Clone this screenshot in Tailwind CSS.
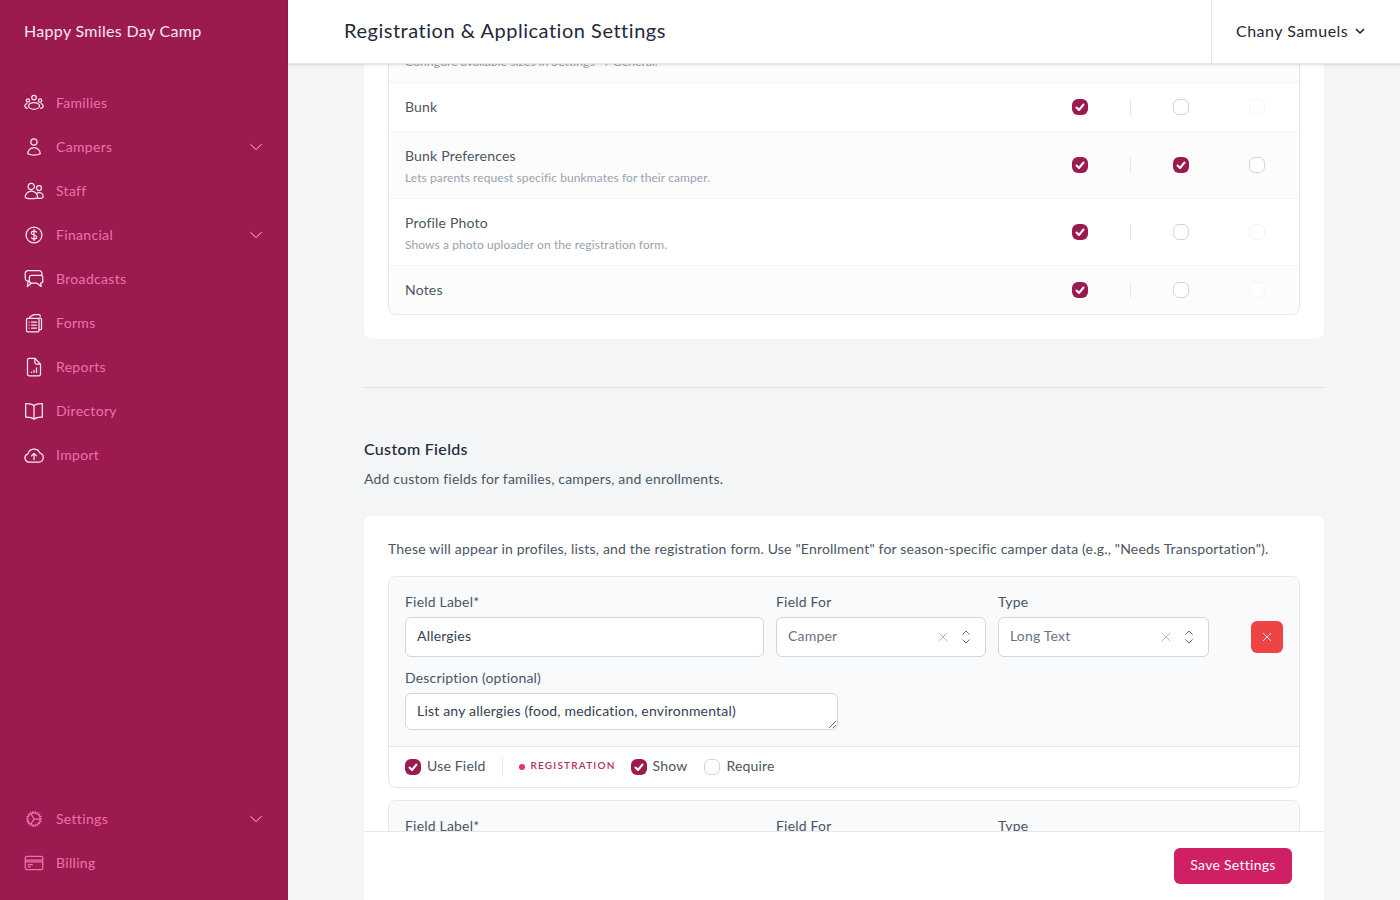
<!DOCTYPE html>
<html lang="en">

<head>
    <meta charset="UTF-8">
    <meta name="viewport" content="width=device-width, initial-scale=1.0">
    <title>Registration & Application Settings</title>
    <script src="https://cdn.jsdelivr.net/npm/@tailwindcss/browser@4"></script>
</head>

<body class="bg-[#f3f5f7] font-['Lato',sans-serif] tracking-[0.012em]">
    <div class="flex w-full h-screen overflow-hidden">
        <!-- Sidebar -->
        <div class="w-[288px] shrink-0 bg-[#9b1a4f] flex flex-col pb-[15px] tracking-[0.02em]">
            <div class="h-16 flex items-center pl-6 pb-[2px] text-base text-[#fce7f3]">Happy Smiles Day Camp</div>
            <div class="mt-[17px] flex flex-col flex-1 text-sm text-[#f070ad]">
                <a class="h-11 flex items-center pl-6 pr-[24px]">
                    <svg class="w-5 h-5 text-[#fce7f3]" fill="none" viewBox="0 0 24 24" stroke="currentColor" stroke-width="1.5"><circle cx="12" cy="5.5" r="2.7"/><circle cx="4.7" cy="9" r="2"/><circle cx="19.3" cy="9" r="2"/><ellipse cx="12" cy="15.5" rx="6.5" ry="4"/><path d="M4 12.5c-1.800.5-3 1.500-3 3s1.300 2.500 3.500 3M20 12.500c1.800.5 3 1.500 3 3s-1.300 2.500-3.500 3"/></svg>
                    <span class="ml-3">Families</span>
                </a>
                <a class="h-11 flex items-center pl-6 pr-[24px]">
                    <svg class="w-5 h-5 text-[#fce7f3]" fill="none" viewBox="0 0 24 24" stroke="currentColor" stroke-width="1.5"><path stroke-linecap="round" stroke-linejoin="round" d="M15.750 6a3.750 3.750 0 11-7.500 0 3.750 3.750 0 017.500 0zM4.500 20.120a7.500 7.500 0 0115 0A17.900 17.900 0 0112 21.750c-2.680 0-5.220-.58-7.500-1.630z"/></svg>
                    <span class="ml-3">Campers</span>
                    <svg class="w-4 h-4 ml-auto text-[#f9c6dc]" fill="none" viewBox="0 0 24 24" stroke="currentColor" stroke-width="1.500"><path stroke-linecap="round" stroke-linejoin="round" d="M4 8l8 8 8-8"/></svg>
                </a>
                <a class="h-11 flex items-center pl-6 pr-[24px]">
                    <svg class="w-5 h-5 text-[#fce7f3]" fill="none" viewBox="0 0 24 24" stroke="currentColor" stroke-width="1.5"><path stroke-linecap="round" stroke-linejoin="round" d="M12.500 6.500a3.750 3.750 0 11-7.500 0 3.750 3.750 0 017.500 0zM21 8.500a3 3 0 11-6 0 3 3 0 016 0zM1.500 19.500a7.400 7.400 0 0114.800 0c0 1-3 1.700-7.400 1.700s-7.400-.7-7.400-1.700zM16.500 20.800c3.500 0 6.500-.7 6.500-2 0-2.800-2.300-4.800-5-4.800-1 0-2 .3-2.800.8"/></svg>
                    <span class="ml-3">Staff</span>
                </a>
                <a class="h-11 flex items-center pl-6 pr-[24px]">
                    <svg class="w-5 h-5 text-[#fce7f3]" fill="none" viewBox="0 0 24 24" stroke="currentColor" stroke-width="1.5"><circle cx="12" cy="12" r="9.500"/><path stroke-linecap="round" stroke-linejoin="round" d="M12 5.500v13M15 8.500c-.7-.9-1.800-1.300-3-1.300-1.800 0-3.200 1-3.200 2.400 0 3.300 6.400 1.500 6.400 4.800 0 1.400-1.400 2.400-3.200 2.400-1.200 0-2.300-.4-3-1.300"/></svg>
                    <span class="ml-3">Financial</span>
                    <svg class="w-4 h-4 ml-auto text-[#f9c6dc]" fill="none" viewBox="0 0 24 24" stroke="currentColor" stroke-width="1.500"><path stroke-linecap="round" stroke-linejoin="round" d="M4 8l8 8 8-8"/></svg>
                </a>
                <a class="h-11 flex items-center pl-6 pr-[24px]">
                    <svg class="w-5 h-5 text-[#fce7f3]" fill="none" viewBox="0 0 24 24" stroke="currentColor" stroke-width="1.5"><path stroke-linecap="round" stroke-linejoin="round" d="M5.500 14.500H5A3.500 3.500 0 011.500 11V5.500A3.500 3.500 0 015 2h13a3.500 3.500 0 013.500 3.500V7.500M5 14.500L4 21l5-4M9 7.500h11a2.500 2.500 0 012.500 2.500v4.500A2.500 2.500 0 0120 17l.5 4-5-4H9a2.500 2.500 0 01-2.500-2.500V10A2.500 2.500 0 019 7.500z"/></svg>
                    <span class="ml-3">Broadcasts</span>
                </a>
                <a class="h-11 flex items-center pl-6 pr-[24px]">
                    <svg class="w-5 h-5 text-[#fce7f3]" fill="none" viewBox="0 0 24 24" stroke="currentColor" stroke-width="1.5"><path stroke-linecap="round" stroke-linejoin="round" d="M7 6.500V4.500L12 2h6a1.500 1.500 0 011.500 1.500V4M18 6h1.500a1.500 1.500 0 011.500 1.500v11a1.500 1.500 0 01-1.500 1.500H18M4.500 6.500h12A1.500 1.500 0 0118 8v13a1.500 1.500 0 01-1.500 1.500h-12A1.500 1.500 0 013 21V8a1.500 1.500 0 011.500-1.500zM9 11h6M9 14.500h6M9 18h6M6 11h.1M6 14.500h.1M6 18h.1"/></svg>
                    <span class="ml-3">Forms</span>
                </a>
                <a class="h-11 flex items-center pl-6 pr-[24px]">
                    <svg class="w-5 h-5 text-[#fce7f3]" fill="none" viewBox="0 0 24 24" stroke="currentColor" stroke-width="1.5"><path stroke-linecap="round" stroke-linejoin="round" d="M13 1.500H6A1.800 1.800 0 004.200 3.300v17.400A1.800 1.800 0 006 22.500h12a1.800 1.800 0 001.800-1.800V8.500zM13 1.500v5.200a1.800 1.800 0 001.800 1.800h5M9 18.500v-.5M12 18.500v-2.500M15 18.500V13"/></svg>
                    <span class="ml-3">Reports</span>
                </a>
                <a class="h-11 flex items-center pl-6 pr-[24px]">
                    <svg class="w-5 h-5 text-[#fce7f3]" fill="none" viewBox="0 0 24 24" stroke="currentColor" stroke-width="1.5"><path stroke-linecap="round" stroke-linejoin="round" d="M12 5.500C10 3.800 7 3 2 3.200v16.300c5-.2 8 .6 10 2.300 2-1.700 5-2.500 10-2.300V3.200C17 3 14 3.800 12 5.500zM12 5.500v16.300"/></svg>
                    <span class="ml-3">Directory</span>
                </a>
                <a class="h-11 flex items-center pl-6 pr-[24px]">
                    <svg class="w-5 h-5 text-[#fce7f3]" fill="none" viewBox="0 0 24 24" stroke="currentColor" stroke-width="1.5"><path stroke-linecap="round" stroke-linejoin="round" d="M6 20.500a5 5 0 01-1.200-9.800 7.400 7.400 0 0114.200-1A5.500 5.500 0 0118 20.500zM12 17.500v-7M9 13l3-3 3 3"/></svg>
                    <span class="ml-3">Import</span>
                </a>
                <a class="h-11 flex items-center pl-6 pr-[24px] mt-auto">
                    <svg class="w-5 h-5 text-[#f070ad]" fill="none" viewBox="0 0 24 24" stroke="currentColor" stroke-width="1.5"><path stroke-linecap="round" stroke-linejoin="round" d="M4.500 12a7.500 7.500 0 0015 0m-15 0a7.500 7.500 0 1115 0m-15 0H3m16.500 0H21m-1.500 0H12m-8.457 3.077l1.410-.513m14.095-5.130l1.410-.513M5.106 17.785l1.150-.964m11.490-9.642l1.149-.964M7.501 19.795l.750-1.300m7.500-12.990l.750-1.300m-6.063 16.658l.260-1.477m2.605-14.772l.260-1.477m0 17.726l-.260-1.477M10.698 4.614l-.260-1.477M16.500 19.794l-.750-1.299M7.500 4.205L12 12m6.894 5.785l-1.149-.964M6.256 7.178l-1.150-.964m15.352 8.864l-1.410-.513M4.954 9.435l-1.410-.514M12.002 12l-3.750 6.495"/></svg>
                    <span class="ml-3">Settings</span>
                    <svg class="w-4 h-4 ml-auto text-[#f9c6dc]" fill="none" viewBox="0 0 24 24" stroke="currentColor" stroke-width="1.500"><path stroke-linecap="round" stroke-linejoin="round" d="M4 8l8 8 8-8"/></svg>
                </a>
                <a class="h-11 flex items-center pl-6 pr-[24px]">
                    <svg class="w-5 h-5 text-[#f070ad]" fill="none" viewBox="0 0 24 24" stroke="currentColor" stroke-width="1.5"><rect x="1.500" y="4" width="21" height="16" rx="2"/><path d="M1.500 8.500h21M1.500 10.500h21"/><path stroke-linecap="round" d="M5 14h5M5 16.500h2.500"/></svg>
                    <span class="ml-3">Billing</span>
                </a>
            </div>
        </div>

        <!-- Right side -->
        <div class="flex-1 min-w-0 flex flex-col">
            <!-- Header -->
            <div class="h-16 shrink-0 bg-white border-b border-gray-200 shadow-sm flex items-center z-10">
                <div class="pl-14 pb-[4px] flex-1 text-xl text-[#1f2937] tracking-[0.026em]">Registration &amp; Application Settings</div>
                <div class="w-[189px] h-full border-l border-gray-200 flex items-center pl-6 pb-[2px] text-base text-[#1f2937] tracking-[0.03em]">
                    Chany Samuels
                    <svg class="w-3 h-3 ml-[6px] text-gray-800" fill="none" viewBox="0 0 24 24" stroke="currentColor" stroke-width="3.500"><path stroke-linecap="round" stroke-linejoin="round" d="M5 9l7 7 7-7"/></svg>
                </div>
            </div>

            <!-- Scrolled content -->
            <div class="relative flex-1 overflow-hidden">
                <div class="px-[76px] -mt-[73px]">
                    <!-- Field visibility card -->
                    <div class="bg-white rounded-lg p-6">
                        <div class="border border-gray-200 rounded-lg text-sm text-[#4b5563]">
                            <div class="h-[67px] bg-[#fcfcfd] border-b border-gray-100 pl-4 pt-[2px] flex flex-col justify-center">
                                <p>Size</p>
                                <p class="mt-1 text-xs text-gray-400 tracking-[0.0075em]">Configure available sizes in Settings → General.</p>
                            </div>
                            <div class="h-[49px] border-b border-gray-100 px-4 flex items-center">
                                <p>Bunk</p>
                                <div class="ml-auto mr-[18px] flex items-center">
                                    <span class="w-4 h-4 rounded-[6px] bg-[#9b1a4f] flex items-center justify-center"><svg class="w-3 h-3 text-white" fill="none" viewBox="0 0 24 24" stroke="currentColor" stroke-width="4"><path stroke-linecap="round" stroke-linejoin="round" d="M5 13l5 5L19 7"/></svg></span>
                                    <span class="ml-[42px] w-px h-4 bg-gray-200"></span>
                                    <span class="ml-[42px] w-4 h-4 rounded-[6px] border border-gray-300 bg-white"></span>
                                    <span class="ml-[60px] w-4 h-4 rounded-[6px] border border-gray-100 bg-white"></span>
                                </div>
                            </div>
                            <div class="h-[67px] bg-[#fcfcfd] border-b border-gray-100 px-4 flex items-center">
                                <div class="pt-[2px]">
                                    <p>Bunk Preferences</p>
                                    <p class="mt-1 text-xs text-gray-400 tracking-[0.0075em]">Lets parents request specific bunkmates for their camper.</p>
                                </div>
                                <div class="ml-auto mr-[18px] flex items-center">
                                    <span class="w-4 h-4 rounded-[6px] bg-[#9b1a4f] flex items-center justify-center"><svg class="w-3 h-3 text-white" fill="none" viewBox="0 0 24 24" stroke="currentColor" stroke-width="4"><path stroke-linecap="round" stroke-linejoin="round" d="M5 13l5 5L19 7"/></svg></span>
                                    <span class="ml-[42px] w-px h-4 bg-gray-200"></span>
                                    <span class="ml-[42px] w-4 h-4 rounded-[6px] bg-[#9b1a4f] flex items-center justify-center"><svg class="w-3 h-3 text-white" fill="none" viewBox="0 0 24 24" stroke="currentColor" stroke-width="4"><path stroke-linecap="round" stroke-linejoin="round" d="M5 13l5 5L19 7"/></svg></span>
                                    <span class="ml-[60px] w-4 h-4 rounded-[6px] border border-gray-300 bg-white"></span>
                                </div>
                            </div>
                            <div class="h-[67px] border-b border-gray-100 px-4 flex items-center">
                                <div class="pt-[2px]">
                                    <p>Profile Photo</p>
                                    <p class="mt-1 text-xs text-gray-400 tracking-[0.0075em]">Shows a photo uploader on the registration form.</p>
                                </div>
                                <div class="ml-auto mr-[18px] flex items-center">
                                    <span class="w-4 h-4 rounded-[6px] bg-[#9b1a4f] flex items-center justify-center"><svg class="w-3 h-3 text-white" fill="none" viewBox="0 0 24 24" stroke="currentColor" stroke-width="4"><path stroke-linecap="round" stroke-linejoin="round" d="M5 13l5 5L19 7"/></svg></span>
                                    <span class="ml-[42px] w-px h-4 bg-gray-200"></span>
                                    <span class="ml-[42px] w-4 h-4 rounded-[6px] border border-gray-300 bg-white"></span>
                                    <span class="ml-[60px] w-4 h-4 rounded-[6px] border border-gray-100 bg-white"></span>
                                </div>
                            </div>
                            <div class="h-[48px] bg-[#fcfcfd] rounded-b-lg px-4 flex items-center">
                                <p>Notes</p>
                                <div class="ml-auto mr-[18px] flex items-center">
                                    <span class="w-4 h-4 rounded-[6px] bg-[#9b1a4f] flex items-center justify-center"><svg class="w-3 h-3 text-white" fill="none" viewBox="0 0 24 24" stroke="currentColor" stroke-width="4"><path stroke-linecap="round" stroke-linejoin="round" d="M5 13l5 5L19 7"/></svg></span>
                                    <span class="ml-[42px] w-px h-4 bg-gray-200"></span>
                                    <span class="ml-[42px] w-4 h-4 rounded-[6px] border border-gray-300 bg-white"></span>
                                    <span class="ml-[60px] w-4 h-4 rounded-[6px] border border-gray-100 bg-white"></span>
                                </div>
                            </div>
                        </div>
                    </div>

                    <div class="my-12 border-t border-[#e0e2e6]"></div>

                    <!-- Custom Fields -->
                    <h2 class="mt-[49px] text-base font-medium text-[#1f2937] tracking-[0.02em]">Custom Fields</h2>
                    <p class="mt-2 text-sm text-[#4b5563]">Add custom fields for families, campers, and enrollments.</p>

                    <div class="mt-[27px] bg-white rounded-t-lg px-6 pt-[23px] pb-40">
                        <p class="text-sm text-[#4b5563]">These will appear in profiles, lists, and the registration form. Use "Enrollment" for season-specific camper data (e.g., "Needs Transportation").</p>

                        <div class="mt-[17px] border border-gray-200 rounded-lg text-sm text-[#4b5563]">
                            <div class="bg-[#f8fafc] rounded-t-lg border-b border-gray-200 px-4 pt-[15px] h-[170px]">
                                <div class="flex items-start">
                                    <div class="w-[359px]">
                                        <label class="block leading-[20px]">Field Label*</label>
                                        <input class="mt-[5px] w-full h-10 pl-[11px] pr-3 pb-[4px] bg-white border border-gray-300 rounded-md text-sm text-[#374151]" value="Allergies">
                                    </div>
                                    <div class="ml-3 w-[210px]">
                                        <label class="block leading-[20px]">Field For</label>
                                        <div class="mt-[5px] h-10 pl-[11px] pr-3 bg-white border border-gray-300 rounded-md flex items-center">
                                            <span class="pb-[2px] text-[#6b7280]">Camper</span>
                                            <svg class="w-3 h-3 ml-auto text-gray-400" fill="none" viewBox="0 0 24 24" stroke="currentColor" stroke-width="1.500"><path stroke-linecap="round" d="M4 4l16 16M20 4L4 20"/></svg>
                                            <svg class="w-4 h-4 ml-[9px] -mr-[1px] text-gray-500" fill="none" viewBox="0 0 24 24" stroke="currentColor" stroke-width="1.500"><path stroke-linecap="round" stroke-linejoin="round" d="M7 8l5-5 5 5M7 16l5 5 5-5"/></svg>
                                        </div>
                                    </div>
                                    <div class="ml-3 w-[211px]">
                                        <label class="block leading-[20px]">Type</label>
                                        <div class="mt-[5px] h-10 pl-[11px] pr-3 bg-white border border-gray-300 rounded-md flex items-center">
                                            <span class="pb-[2px] text-[#6b7280]">Long Text</span>
                                            <svg class="w-3 h-3 ml-auto text-gray-400" fill="none" viewBox="0 0 24 24" stroke="currentColor" stroke-width="1.500"><path stroke-linecap="round" d="M4 4l16 16M20 4L4 20"/></svg>
                                            <svg class="w-4 h-4 ml-[9px] -mr-[1px] text-gray-500" fill="none" viewBox="0 0 24 24" stroke="currentColor" stroke-width="1.500"><path stroke-linecap="round" stroke-linejoin="round" d="M7 8l5-5 5 5M7 16l5 5 5-5"/></svg>
                                        </div>
                                    </div>
                                    <button class="ml-[42px] mt-[29px] w-8 h-8 rounded-md bg-[#ef4444] flex items-center justify-center">
                                        <svg class="w-[10px] h-[10px] text-white" fill="none" viewBox="0 0 24 24" stroke="currentColor" stroke-width="2"><path stroke-linecap="round" d="M3 3l18 18M21 3L3 21"/></svg>
                                    </button>
                                </div>
                                <label class="block mt-[11px] leading-[20px]">Description (optional)</label>
                                <textarea class="mt-[5px] block w-[433px] h-[37px] pl-[11px] pr-3 pt-[7px] pb-2 bg-white border border-gray-300 rounded-md text-sm leading-[20px] text-[#374151]">List any allergies (food, medication, environmental)</textarea>
                            </div>
                            <div class="h-10 pl-4 flex items-center">
                                <span class="w-4 h-4 rounded-[6px] bg-[#9b1a4f] flex items-center justify-center"><svg class="w-3 h-3 text-white" fill="none" viewBox="0 0 24 24" stroke="currentColor" stroke-width="4"><path stroke-linecap="round" stroke-linejoin="round" d="M5 13l5 5L19 7"/></svg></span>
                                <span class="ml-[6px] pb-[2px]">Use Field</span>
                                <span class="ml-4 w-px h-5 bg-gray-200"></span>
                                <span class="ml-4 w-[6px] h-[6px] rounded-full bg-[#e0316f]"></span>
                                <span class="ml-[6px] pb-[4px] text-[10px] font-semibold tracking-[0.12em] text-[#b03064]">REGISTRATION</span>
                                <span class="ml-[15px] w-4 h-4 rounded-[6px] bg-[#9b1a4f] flex items-center justify-center"><svg class="w-3 h-3 text-white" fill="none" viewBox="0 0 24 24" stroke="currentColor" stroke-width="4"><path stroke-linecap="round" stroke-linejoin="round" d="M5 13l5 5L19 7"/></svg></span>
                                <span class="ml-[6px] pb-[2px]">Show</span>
                                <span class="ml-[17px] w-4 h-4 rounded-[6px] border border-gray-300 bg-white"></span>
                                <span class="ml-[6px] pb-[2px]">Require</span>
                            </div>
                        </div>

                        <div class="mt-3 border border-gray-200 rounded-lg text-sm text-[#4b5563]">
                            <div class="bg-[#f8fafc] rounded-t-lg pl-4 pt-[15px] h-[170px] flex items-start">
                                <label class="w-[371px] leading-[20px]">Field Label*</label>
                                <label class="w-[222px] leading-[20px]">Field For</label>
                                <label class="leading-[20px]">Type</label>
                            </div>
                        </div>
                    </div>
                </div>

                <!-- Save bar, stays over the scrolled card -->
                <div class="absolute bottom-0 left-[76px] w-[960px] h-[69px] bg-white border-t border-gray-200 flex items-center justify-end pr-8">
                    <button class="h-9 w-[118px] pb-[2px] rounded-md bg-[#cf2066] text-sm text-white tracking-[0.02em]">Save Settings</button>
                </div>
            </div>
        </div>
    </div>
</body>

</html>
